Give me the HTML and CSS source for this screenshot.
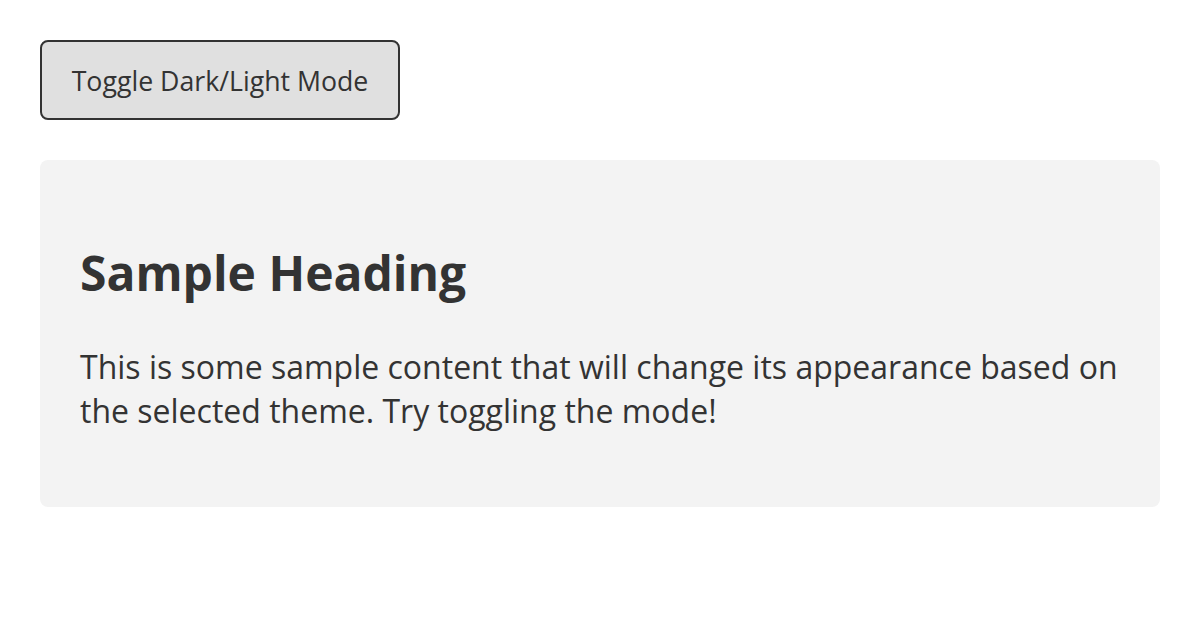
FILE: index.html
```html
<!DOCTYPE html>
<html lang="en">
<head>
    <meta charset="UTF-8">
    <meta name="viewport" content="width=device-width, initial-scale=1.0">
    <title>Theme Toggle</title>
    <link rel="stylesheet" href="styles.css">
</head>
<body>
    <button class="toggle" onclick="toggleTheme()">Toggle Dark/Light Mode</button>
    <div class="content">
        <h1>Sample Heading</h1>
        <p>This is some sample content that will change its appearance based on the selected theme. Try toggling the mode!</p>
    </div>
    <script>
        function toggleTheme() {
            document.body.classList.toggle("dark");
        }
    </script>
</body>
</html>
```

FILE: styles.css
```css
body {
    margin: 0;
    padding: 40px;
    font-family: "Open Sans", sans-serif;
    background-color: #fff;
    color: #333;
}
.toggle {
    display: block;
    width: 360px;
    height: 80px;
    font-family: inherit;
    font-size: 26.7px;
    color: #333;
    background: #e0e0e0;
    border: 2px solid #333;
    border-radius: 8px;
    cursor: pointer;
}
.content {
    margin-top: 40px;
    padding: 40px;
    background: #f3f3f3;
    border-radius: 8px;
}
.content h1 {
    font-size: 48px;
    margin: 40px 0;
}
.content p {
    font-size: 32px;
    line-height: 44px;
    margin: 0 0 34px;
}
body.dark {
    background-color: #222;
    color: #eee;
}
body.dark .content {
    background: #333;
}
```
